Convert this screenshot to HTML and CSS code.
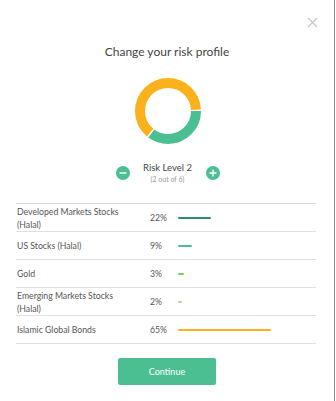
FILE: index.html
```html
<!DOCTYPE html>
<html lang="en">

<head>
  <meta charset="UTF-8">
  <meta name="viewport" content="width=device-width, initial-scale=1.0">
  <title>Change your risk profile</title>
  <link rel="stylesheet" href="styles.css">
</head>

<body>
  <section class="modal">
    <button class="close" aria-label="Close">
      <svg width="11" height="11" viewBox="0 0 11 11">
        <path d="M1 1 L10 10 M10 1 L1 10" stroke="#c4c4c4" stroke-width="1.2" fill="none" />
      </svg>
    </button>

    <h1 class="title">Change your risk profile</h1>

    <div class="donut">
      <svg width="68" height="68" viewBox="0 0 68 68">
        <circle cx="34" cy="34" r="28" fill="none" stroke="#4bbf92" stroke-width="10"
          stroke-dasharray="61.8 200" stroke-dashoffset="0" />
        <circle cx="34" cy="34" r="28" fill="none" stroke="#fbb11c" stroke-width="10"
          stroke-dasharray="111.1 200" stroke-dashoffset="-63.3" />
      </svg>
    </div>

    <div class="level">
      <button class="step" aria-label="Lower risk">
        <svg width="14" height="14" viewBox="0 0 14 14">
          <circle cx="7" cy="7" r="7" fill="#4bbf92" />
          <path d="M3.5 7 H10.5" stroke="#fff" stroke-width="1.4" />
        </svg>
      </button>
      <div class="level-text">
        <div class="level-name">Risk Level 2</div>
        <div class="level-sub">(2 out of 6)</div>
      </div>
      <button class="step" aria-label="Higher risk">
        <svg width="14" height="14" viewBox="0 0 14 14">
          <circle cx="7" cy="7" r="7" fill="#4bbf92" />
          <path d="M3.5 7 H10.5 M7 3.5 V10.5" stroke="#fff" stroke-width="1.4" />
        </svg>
      </button>
    </div>

    <div class="allocation">
      <div class="row">
        <div class="name">Developed Markets Stocks<br>(Halal)</div>
        <div class="pct">22%</div>
        <div class="bar dev" style="width: 33px"></div>
      </div>
      <div class="row">
        <div class="name">US Stocks (Halal)</div>
        <div class="pct">9%</div>
        <div class="bar us" style="width: 14px"></div>
      </div>
      <div class="row">
        <div class="name">Gold</div>
        <div class="pct">3%</div>
        <div class="bar gold" style="width: 6px"></div>
      </div>
      <div class="row">
        <div class="name">Emerging Markets Stocks<br>(Halal)</div>
        <div class="pct">2%</div>
        <div class="bar em" style="width: 4px"></div>
      </div>
      <div class="row">
        <div class="name">Islamic Global Bonds</div>
        <div class="pct">65%</div>
        <div class="bar bonds" style="width: 93px"></div>
      </div>
    </div>

    <div class="actions">
      <button class="continue">Continue</button>
    </div>
  </section>
</body>

</html>
```

FILE: styles.css
```css
* {
  margin: 0;
  padding: 0;
  box-sizing: border-box;
}

body {
  font-family: Lato, "Open Sans", sans-serif;
  background-color: white;
  color: #444;
}

button {
  border: none;
  background: none;
  font-family: inherit;
  cursor: pointer;
}

.modal {
  position: relative;
  width: 335px;
  height: 401px;
  border-right: 1px solid #8c8c8c;
  padding-top: 43px;
}

.close {
  position: absolute;
  top: 17px;
  right: 16px;
  display: flex;
}

.title {
  font-size: 12px;
  font-weight: 400;
  line-height: 18px;
  text-align: center;
  color: #444;
}

.donut {
  display: flex;
  justify-content: center;
  margin-top: 16px;
  margin-left: 1px;
}

.level {
  display: flex;
  justify-content: center;
  align-items: center;
  gap: 8px;
  margin-top: 17px;
  margin-left: 1px;
}

.step {
  display: flex;
}

.level-text {
  min-width: 60px;
  text-align: center;
}

.level-name {
  font-size: 9.5px;
  line-height: 12px;
  color: #444;
}

.level-sub {
  font-size: 7px;
  line-height: 10px;
  color: #999;
}

.allocation {
  margin: 19px 18px 0 16px;
  border-top: 1px solid #d9d9d9;
}

.row {
  display: flex;
  align-items: center;
  height: 28px;
  border-bottom: 1px solid #e0e0e0;
  font-size: 8.7px;
  line-height: 13px;
  color: #555;
}

.name {
  width: 134px;
  padding-left: 1px;
}

.pct {
  width: 28px;
}

.bar {
  height: 2px;
  border-radius: 1px;
}

.dev {
  background-color: #2e8b68;
}

.us {
  background-color: #4bbf92;
}

.gold {
  background-color: #78d05a;
}

.em {
  background-color: #a6dc96;
}

.bonds {
  background-color: #fbb11c;
}

.actions {
  display: flex;
  justify-content: center;
  margin-top: 14px;
}

.continue {
  width: 98px;
  height: 27px;
  border-radius: 2px;
  background-color: #4bbf92;
  color: white;
  font-size: 9px;
}
```
